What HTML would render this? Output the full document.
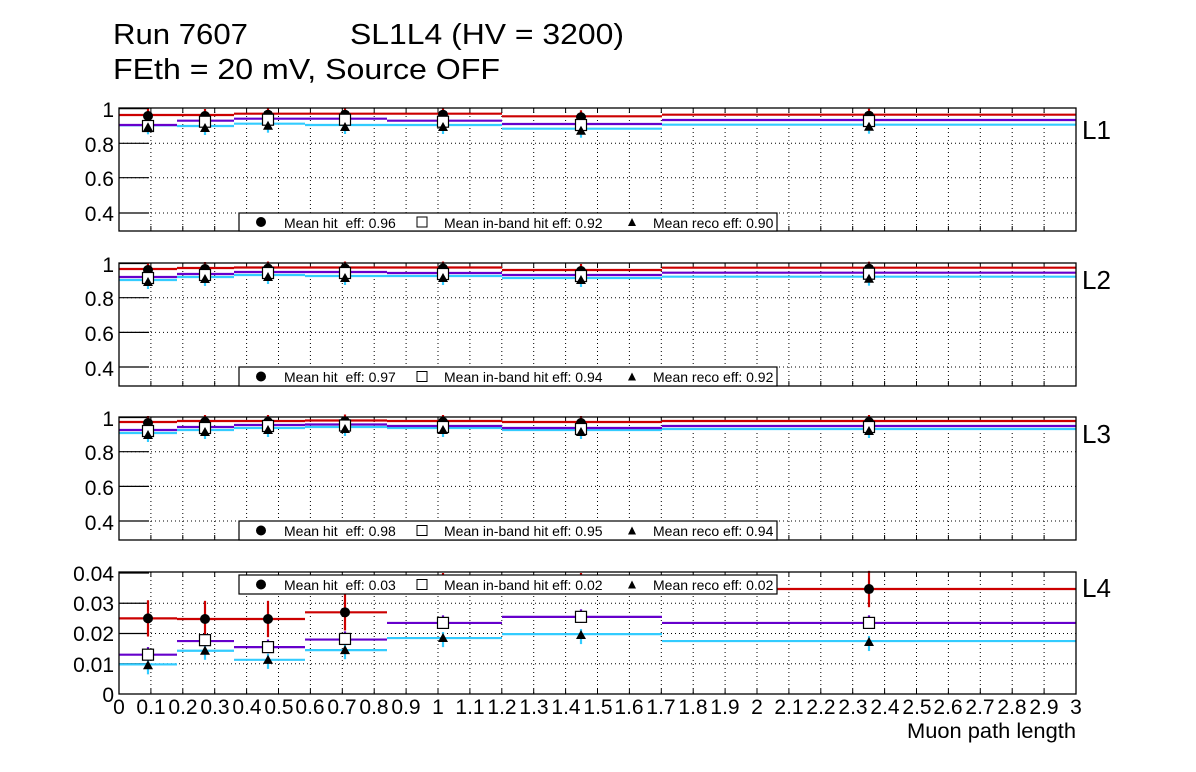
<!DOCTYPE html>
<html><head><meta charset="utf-8"><style>
body{margin:0;background:#fff;width:1196px;height:772px;overflow:hidden}
svg{display:block;font-family:"Liberation Sans",sans-serif}
</style></head><body>
<svg id="s" width="1196" height="772" viewBox="0 0 1196 772">
<g id="plots"></g>
<g font-size="29" fill="#000">
<text x="113" y="44" textLength="135" lengthAdjust="spacingAndGlyphs">Run 7607</text>
<text x="350" y="44" textLength="274" lengthAdjust="spacingAndGlyphs">SL1L4 (HV = 3200)</text>
<text x="113" y="79" textLength="387" lengthAdjust="spacingAndGlyphs">FEth = 20 mV, Source OFF</text>
</g>
<g font-size="26">
<text x="1082" y="139">L1</text>
<text x="1082" y="289">L2</text>
<text x="1082" y="443">L3</text>
<text x="1082" y="597">L4</text>
</g>
<g font-size="21" text-anchor="end">
<text x="114" y="117">1</text><text x="114" y="152">0.8</text><text x="114" y="186">0.6</text><text x="114" y="221">0.4</text>
<text x="114" y="272">1</text><text x="114" y="306">0.8</text><text x="114" y="341">0.6</text><text x="114" y="376">0.4</text>
<text x="114" y="426">1</text><text x="114" y="460">0.8</text><text x="114" y="495">0.6</text><text x="114" y="530">0.4</text>
<text x="114" y="581">0.04</text><text x="114" y="611">0.03</text><text x="114" y="641">0.02</text><text x="114" y="672">0.01</text><text x="114" y="702">0</text>
</g>
<g font-size="21" text-anchor="middle">
<text x="119" y="714">0</text><text x="151" y="714">0.1</text><text x="183" y="714">0.2</text><text x="215" y="714">0.3</text><text x="247" y="714">0.4</text><text x="279" y="714">0.5</text><text x="310" y="714">0.6</text><text x="342" y="714">0.7</text><text x="374" y="714">0.8</text><text x="406" y="714">0.9</text><text x="438" y="714">1</text><text x="470" y="714">1.1</text><text x="502" y="714">1.2</text><text x="534" y="714">1.3</text><text x="566" y="714">1.4</text><text x="598" y="714">1.5</text><text x="629" y="714">1.6</text><text x="661" y="714">1.7</text><text x="693" y="714">1.8</text><text x="725" y="714">1.9</text><text x="757" y="714">2</text><text x="789" y="714">2.1</text><text x="821" y="714">2.2</text><text x="853" y="714">2.3</text><text x="885" y="714">2.4</text><text x="917" y="714">2.5</text><text x="948" y="714">2.6</text><text x="980" y="714">2.7</text><text x="1012" y="714">2.8</text><text x="1044" y="714">2.9</text><text x="1076" y="714">3</text>
</g>
<text x="1076" y="738" font-size="21" text-anchor="end" textLength="169" lengthAdjust="spacingAndGlyphs">Muon path length</text>
<g id="legs"></g>
<g font-size="14">
<text x="284" y="228">Mean hit&#160; eff: 0.96</text><text x="444" y="228">Mean in-band hit eff: 0.92</text><text x="653" y="228">Mean reco eff: 0.90</text>
<text x="284" y="382">Mean hit&#160; eff: 0.97</text><text x="444" y="382">Mean in-band hit eff: 0.94</text><text x="653" y="382">Mean reco eff: 0.92</text>
<text x="284" y="536">Mean hit&#160; eff: 0.98</text><text x="444" y="536">Mean in-band hit eff: 0.95</text><text x="653" y="536">Mean reco eff: 0.94</text>
<text x="284" y="590">Mean hit&#160; eff: 0.03</text><text x="444" y="590">Mean in-band hit eff: 0.02</text><text x="653" y="590">Mean reco eff: 0.02</text>
</g>
</svg>
<script>
const NS="http://www.w3.org/2000/svg";
const P=document.getElementById('plots');
const L=document.getElementById('legs');
function el(t,a,par){const e=document.createElementNS(NS,t);for(const k in a)e.setAttribute(k,a[k]);(par||P).appendChild(e);return e;}
const X0=119,X1=1076;
const xv=v=>X0+(X1-X0)*v/3;
const edges=[119,177,234,305,387,502,662,1076];
const px=[148,205,268,345,443,581,869];
const panels=[
 {top:108,bot:231,grid:[143.3,177.7,213],ticks:[108.7,143.3,177.7,213],
  red:[115,115,113.7,113.7,113.7,116.3,114.7],pur:[125,120.7,118.7,118.7,120.7,124,120],cy:[125.3,126,123.7,125,125,128.7,124.7]},
 {top:263,bot:386,grid:[297.7,332.4,367],ticks:[263.5,297.7,332.4,367],
  red:[269,268,267.5,267.5,267.5,270,267.7],pur:[277,274,272,272,273,275,272.7],cy:[280,277,275,276,276,278,276.7]},
 {top:417,bot:540,grid:[451.7,486.4,521],ticks:[417.5,451.7,486.4,521],
  red:[422,421,421,420.5,421,422,421],pur:[430,427,425,424.5,426,428,426],cy:[433,430,428,427,428,430,429]},
];
function grid(top,bot,hs){
 for(let i=1;i<30;i++){const x=xv(i*0.1);el('line',{x1:x,x2:x,y1:top,y2:bot,stroke:'#000','stroke-width':1,'stroke-dasharray':'1,3'});
  el('line',{x1:x,x2:x,y1:bot,y2:bot-5,stroke:'#000'});el('line',{x1:x,x2:x,y1:top,y2:top+5,stroke:'#000'});}
 hs.forEach(y=>el('line',{x1:X0,x2:X1,y1:y,y2:y,stroke:'#000','stroke-dasharray':'1,3'}));
}
function ticksY(ys){ys.forEach(y=>el('line',{x1:X0,x2:X0+30,y1:y,y2:y,stroke:'#000','stroke-width':1.2}));}
function hist(arr,col){arr.forEach((y,i)=>{if(y!=null)el('line',{x1:edges[i],x2:edges[i+1],y1:y,y2:y,stroke:col,'stroke-width':2.2});});}
function circ(x,y,par){el('circle',{cx:x,cy:y,r:5,fill:'#000'},par);}
function sq(x,y){el('rect',{x:x-5.5,y:y-5.5,width:11,height:11,fill:'#fff',stroke:'#000','stroke-width':1.2});}
function tri(x,y){el('path',{d:`M${x-5},${y+4}L${x+5},${y+4}L${x},${y-5}Z`,fill:'#000'});}
function eb(x,y1,y2,col){el('line',{x1:x,x2:x,y1:y1,y2:y2,stroke:col,'stroke-width':2.2});}
panels.forEach(p=>{
 grid(p.top,p.bot,p.grid);ticksY(p.ticks);
 hist(p.cy,'#33ccff');hist(p.pur,'#6600cc');hist(p.red,'#cc0000');
 px.forEach((x,i)=>{eb(x,p.cy[i]-5,p.cy[i]+9,'#33ccff');eb(x,p.red[i]-6,p.red[i]+4,'#cc0000');
  circ(x,p.red[i]+1);sq(x,p.pur[i]+1);tri(x,p.cy[i]+2);});
});
const T=572,B=694;const yv=v=>B-v*3025;
grid(T,B,[yv(0.03),yv(0.02),yv(0.01)]);ticksY([yv(0.04),yv(0.03),yv(0.02),yv(0.01)]);
const red=[0.025,0.0248,0.0248,0.027,null,null,0.0347],pur=[0.013,0.0175,0.0155,0.018,0.0235,0.0255,0.0235],cy=[0.0098,0.0143,0.0113,0.0145,0.0185,0.0198,0.0175];
hist(cy.map(yv),'#33ccff');hist(pur.map(yv),'#6600cc');hist(red.map(v=>v==null?null:yv(v)),'#cc0000');
const sqv=[0.013,0.0178,0.0155,0.0182,0.0235,0.0255,0.0235],trv=[0.0095,0.0143,0.0113,0.0145,0.0185,0.0195,0.0172];
px.forEach((x,i)=>{
 eb(x,yv(trv[i]+0.002),yv(trv[i]-0.003),'#33ccff');eb(x,yv(sqv[i]+0.0025),yv(sqv[i]-0.002),'#6600cc');
 if(red[i]!=null)eb(x,yv(red[i]+0.006),yv(red[i]-0.006),'#cc0000');
 if(red[i]!=null)circ(x,yv(red[i]));sq(x,yv(sqv[i]));tri(x,yv(trv[i]));
});
eb(443,573,580,'#cc0000');eb(581,573,578,'#cc0000');
[[108,231],[263,386],[417,540],[572,694]].forEach(([t,b])=>el('rect',{x:X0,y:t,width:X1-X0,height:b-t,fill:'none',stroke:'#000','stroke-width':1.3}));
[[213,231],[367,386],[521,540],[575,594]].forEach(([t,b])=>{
 el('rect',{x:239,y:t,width:538,height:b-t,fill:'#fff',stroke:'#000','stroke-width':1.2},L);
 const c=(t+b)/2;circ(261,c,L);el('rect',{x:417,y:c-5,width:10,height:10,fill:'#fff',stroke:'#000'},L);
 el('path',{d:`M${628},${c+4}L${636},${c+4}L632,${c-4}Z`,fill:'#000'},L);
});
</script>
</body></html>
